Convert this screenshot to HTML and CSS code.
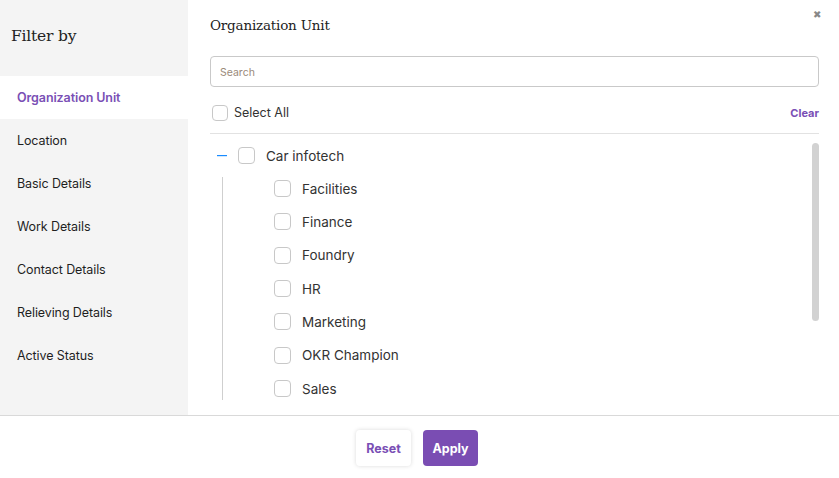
FILE: index.html
```html
<!DOCTYPE html>
<html>
<head>
<meta charset="utf-8">
<link rel="stylesheet" href="styles.css">
</head>
<body>
<div class="app">
  <div class="top">
    <aside class="sidebar">
      <h2 class="side-title">Filter by</h2>
      <ul class="side-list">
        <li class="side-item active">Organization Unit</li>
        <li class="side-item">Location</li>
        <li class="side-item">Basic Details</li>
        <li class="side-item">Work Details</li>
        <li class="side-item">Contact Details</li>
        <li class="side-item">Relieving Details</li>
        <li class="side-item">Active Status</li>
      </ul>
    </aside>
    <main class="main">
      <span class="close">&#x2716;</span>
      <h3 class="main-title">Organization Unit</h3>
      <input class="search" type="text" placeholder="Search">
      <div class="select-row">
        <label class="select-all"><span class="cb cb-sm"></span>Select All</label>
        <span class="clear">Clear</span>
      </div>
      <div class="tree">
        <div class="thumb"></div>
        <div class="node parent">
          <svg class="dash" width="10" height="3" viewBox="0 0 10 3"><rect x="0" y="1" width="10" height="1.2" fill="#1a8cff"/></svg>
          <span class="cb"></span>
          <span class="label">Car infotech</span>
        </div>
        <div class="children">
          <div class="node"><span class="cb"></span><span class="label">Facilities</span></div>
          <div class="node"><span class="cb"></span><span class="label">Finance</span></div>
          <div class="node"><span class="cb"></span><span class="label">Foundry</span></div>
          <div class="node"><span class="cb"></span><span class="label">HR</span></div>
          <div class="node"><span class="cb"></span><span class="label">Marketing</span></div>
          <div class="node"><span class="cb"></span><span class="label">OKR Champion</span></div>
          <div class="node"><span class="cb"></span><span class="label">Sales</span></div>
        </div>
      </div>
    </main>
  </div>
  <footer class="footer">
    <button class="btn btn-reset">Reset</button>
    <button class="btn btn-apply">Apply</button>
  </footer>
</div>
</body>
</html>
```
FILE: styles.css
```css
* { box-sizing: border-box; }
html, body { margin: 0; padding: 0; background: #fff; }
body { font-family: Inter, "Noto Sans", sans-serif; color: #222; }
.app { width: 839px; height: 478px; display: flex; flex-direction: column; overflow: hidden; }
.top { display: flex; height: 415px; }
.sidebar { width: 188px; background: #f4f4f4; flex-shrink: 0; }
.side-title {
  margin: 0; height: 76px; padding: 25px 0 0 11px;
  font-family: "DejaVu Serif", serif; font-weight: normal; font-size: 15.5px;
  line-height: 22px; color: #222; letter-spacing: -0.2px;
}
.side-list { list-style: none; margin: 0; padding: 0; }
.side-item {
  height: 43px; line-height: 43px; padding-left: 17px;
  font-size: 12.5px; color: #1f1f1f; letter-spacing: -0.1px;
}
.side-item.active { background: #fff; color: #7a4fb5; font-weight: 600; }
.main { flex: 1; position: relative; padding: 0 20px 0 22px; }
.close {
  position: absolute; right: 18px; top: 8px; font-size: 10px; color: #888;
}
.main-title {
  margin: 0; padding-top: 15px; height: 56px;
  font-family: "DejaVu Serif", serif; font-weight: normal; font-size: 13.5px;
  line-height: 20px; color: #222; letter-spacing: -0.2px;
}
.search {
  display: block; width: 100%; height: 31px; margin: 0;
  border: 1px solid #c9c9c9; border-radius: 4px; padding: 1px 9px 0;
  font-family: Inter, sans-serif; font-size: 10.5px; outline: none;
}
.search::placeholder { color: #9a8a7a; }
.select-row {
  display: flex; justify-content: space-between; align-items: center;
  margin-top: 10px; margin-bottom: 5px; border-bottom: 1px solid #e2e2e2;
  height: 37px; padding-bottom: 5px;
}
.select-all { display: flex; align-items: center; font-size: 12.5px; color: #333; padding-left: 2px; }
.clear { font-size: 11px; font-weight: 700; color: #7a4fb5; }
.cb {
  display: inline-block; width: 17px; height: 17px; border: 1px solid #c8c8c8;
  border-radius: 4px; background: #fff; flex-shrink: 0;
}
.cb-sm { width: 16px; height: 16px; margin-right: 6px; }
.tree { position: relative; height: 277px; margin-top: -5px; padding-top: 5px; }
.thumb {
  position: absolute; right: 0; top: 9px; width: 7px; height: 178px;
  background: #d2d2d2; border-radius: 4px;
}
.node { display: flex; align-items: center; height: 33.33px; font-size: 13.5px; color: #333; }
.node .cb { margin-right: 11px; }
.parent { padding-left: 7px; height: 33px; }
.dash { display: block; flex-shrink: 0; margin-right: 11px; }
.children { position: relative; margin-left: 12px; padding-left: 52px; }
.children::before {
  content: ""; position: absolute; left: 0; top: 5px; bottom: 5px; width: 1px; background: #cfcfcf;
}
.footer {
  height: 63px; border-top: 1px solid #d9d9d9; display: flex; justify-content: center;
  align-items: center; gap: 12px; padding-right: 5px; padding-top: 2px;
}
.btn {
  width: 55px; height: 36px; border-radius: 4px; border: none;
  font-family: Inter, sans-serif; font-size: 12.5px; font-weight: 700; cursor: pointer;
}
.btn-reset { background: #fff; color: #7a4fb5; box-shadow: 0 0 4px rgba(0,0,0,0.15); }
.btn-apply { background: #7a4db3; color: #fff; }
```
